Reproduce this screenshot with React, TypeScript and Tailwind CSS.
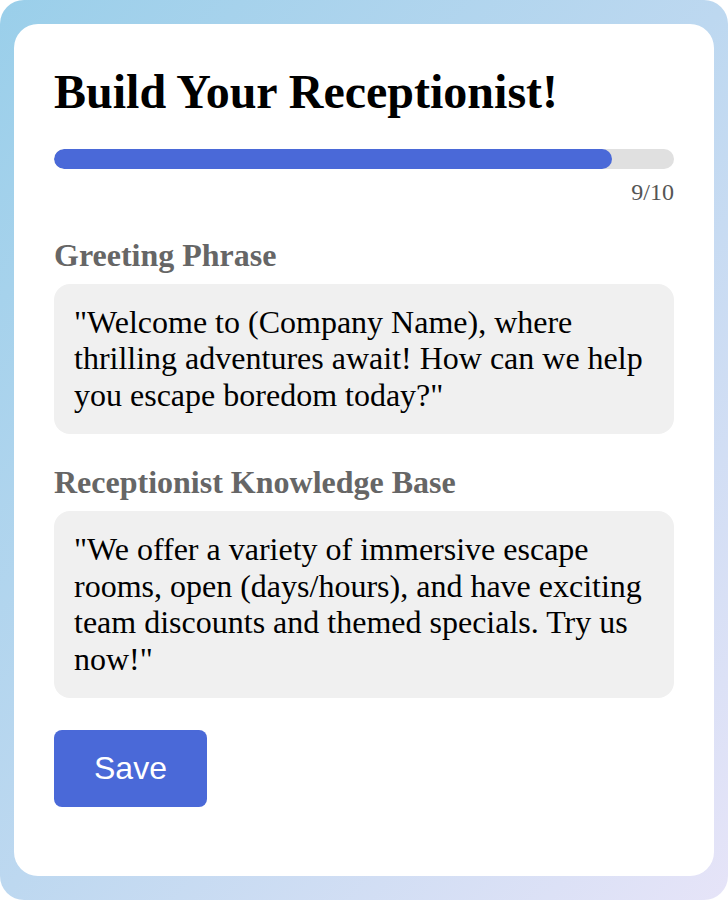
import React from 'react';

const serif = 'font-["Liberation_Serif","Times_New_Roman",serif]';

interface FieldProps {
  label: string;
  text: string;
}

function Field({ label, text }: FieldProps) {
  return (
    <div className="mt-[30px]">
      <h2 className={`${serif} text-[32px] font-bold leading-[1.15] text-[#666666]`}>{label}</h2>
      <div
        className={`${serif} mt-[10px] rounded-2xl bg-[#f0f0f0] px-5 py-5 text-[32px] leading-[1.15] text-black`}>
        {text}
      </div>
    </div>
  );
}

export default function App() {
  const step = 9;
  const total = 10;

  return (
    <div className="flex h-[900px] w-[728px] flex-col rounded-3xl bg-gradient-to-br from-[#9acfea] via-[#bdd8f0] to-[#e6e4f8] px-[14px] py-[24px]">
      <div className="flex-1 rounded-3xl bg-white p-10">
        <h1 className={`${serif} text-[48px] font-bold leading-[1.15] text-black`}>
          Build Your Receptionist!
        </h1>

        <div className="mt-[30px] h-5 w-full overflow-hidden rounded-full bg-[#e0e0e0]">
          <div
            className="h-full rounded-full bg-[#4a69d8]"
            style={{ width: `${(step / total) * 100}%` }}
          />
        </div>
        <p className={`${serif} mt-[10px] text-right text-[24px] leading-[1.15] text-[#555555]`}>
          {step}/{total}
        </p>

        <Field
          label="Greeting Phrase"
          text={'"Welcome to (Company Name), where thrilling adventures await! How can we help you escape boredom today?"'}
        />
        <div className="mt-[2px]" />
        <Field
          label="Receptionist Knowledge Base"
          text={'"We offer a variety of immersive escape rooms, open (days/hours), and have exciting team discounts and themed specials. Try us now!"'}
        />

        <button className='mt-[32px] rounded-lg bg-[#4a69d8] px-10 py-5 font-["Liberation_Sans",Arial,sans-serif] text-[32px] leading-[1.15] text-white'>
          Save
        </button>
      </div>
    </div>
  );
}
